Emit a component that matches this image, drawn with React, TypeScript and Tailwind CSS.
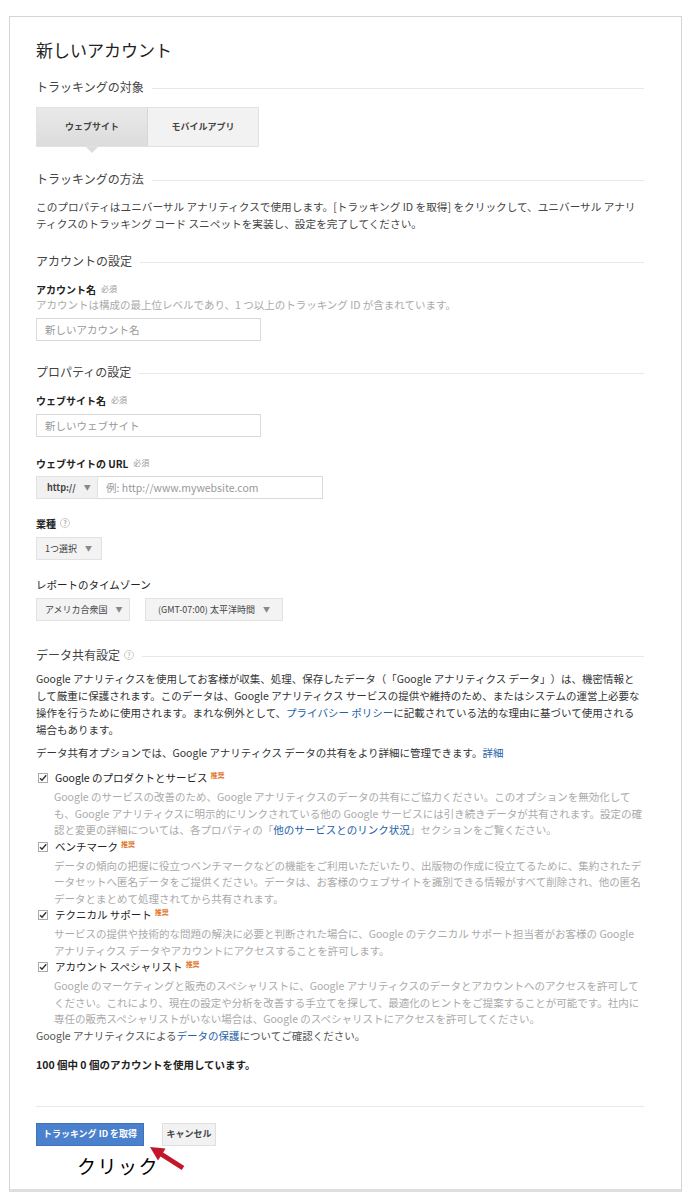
import React from 'react';

const SectionHeader = ({ title, help }: { title: string; help?: boolean }) => (
  <div className="flex items-center text-[12px] leading-[18px] text-[#444]">
    <span>{title}</span>
    {help && <HelpIcon />}
    <div className="flex-1 h-px bg-[#e8e8e8] ml-2 mt-[2px]" />
  </div>
);

const HelpIcon = () => (
  <span className="ml-1 inline-flex items-center justify-center w-[10px] h-[10px] rounded-full border border-[#ccc] text-[7px] leading-none text-[#aaa]">
    ?
  </span>
);

const Required = () => <span className="ml-[5px] text-[8px] font-normal text-[#999]">必須</span>;

const Caret = () => <span className="ml-2 text-[7px] text-[#888]">▼</span>;

const Badge = () => <span className="ml-[3px] self-start text-[7px] leading-[10px] font-bold text-[#e0762a]">推奨</span>;

const CheckBox = () => (
  <svg width="10" height="10" viewBox="0 0 10 10" className="mr-[7px] shrink-0">
    <rect x="0.5" y="0.5" width="9" height="9" fill="#fff" stroke="#aaa" />
    <path d="M2 5.2 L4 7.3 L8.2 2.2" fill="none" stroke="#333" strokeWidth="1.4" />
  </svg>
);

const options = [
  {
    title: 'Google のプロダクトとサービス',
    desc: (
      <>
        Google のサービスの改善のため、Google アナリティクスのデータの共有にご協力ください。このオプションを無効化しても、Google アナリティクスに明示的にリンクされている他の Google サービスには引き続きデータが共有されます。設定の確認と変更の詳細については、各プロパティの「
        <span className="text-[#1d61a8]">他のサービスとのリンク状況</span>」セクションをご覧ください。
      </>
    ),
  },
  {
    title: 'ベンチマーク',
    desc: 'データの傾向の把握に役立つベンチマークなどの機能をご利用いただいたり、出版物の作成に役立てるために、集約されたデータセットへ匿名データをご提供ください。データは、お客様のウェブサイトを識別できる情報がすべて削除され、他の匿名データとまとめて処理されてから共有されます。',
  },
  {
    title: 'テクニカル サポート',
    desc: 'サービスの提供や技術的な問題の解決に必要と判断された場合に、Google のテクニカル サポート担当者がお客様の Google アナリティクス データやアカウントにアクセスすることを許可します。',
  },
  {
    title: 'アカウント スペシャリスト',
    desc: 'Google のマーケティングと販売のスペシャリストに、Google アナリティクスのデータとアカウントへのアクセスを許可してください。これにより、現在の設定や分析を改善する手立てを探して、最適化のヒントをご提案することが可能です。社内に専任の販売スペシャリストがいない場合は、Google のスペシャリストにアクセスを許可してください。',
  },
];

const labelClass = 'flex items-center h-4 text-[10px] font-bold text-[#222]';

const App = () => {
  return (
    <div
      className="min-h-[1200px] bg-white pt-4 pl-[9px]"
      style={{ fontFamily: '"Noto Sans CJK JP", "Liberation Sans", sans-serif' }}
    >
      <div className="w-[673px] h-[1176px] border border-[#d4d4d4] border-b-[3px] border-b-[#dedede] pl-[26px] pr-[37px] pt-[21px] text-[#333]">
        {/* Title */}
        <h1 className="text-[17px] leading-[24px] text-[#222]">新しいアカウント</h1>

        {/* Tracking target */}
        <div className="mt-4">
          <SectionHeader title="トラッキングの対象" />
        </div>
        <div className="mt-[11px] flex w-[223px] h-10 border border-[#e2e2e2] text-[9px] font-bold text-[#444]">
          <div className="relative w-[111px] flex items-center justify-center bg-gradient-to-b from-[#e9e9e9] to-[#dcdcdc] border-r border-[#d6d6d6]">
            ウェブサイト
            <div className="absolute left-1/2 -translate-x-1/2 -bottom-[7px] w-0 h-0 border-l-[6px] border-r-[6px] border-t-[6px] border-l-transparent border-r-transparent border-t-[#dcdcdc]" />
          </div>
          <div className="flex-1 flex items-center justify-center bg-[#f2f2f2]">モバイルアプリ</div>
        </div>

        {/* Tracking method */}
        <div className="mt-[23px]">
          <SectionHeader title="トラッキングの方法" />
        </div>
        <p className="mt-[10px] text-[10.65px] leading-[17px] text-[#444]">
          このプロパティはユニバーサル アナリティクスで使用します。[トラッキング ID を取得] をクリックして、ユニバーサル アナリティクスのトラッキング コード スニペットを実装し、設定を完了してください。
        </p>

        {/* Account settings */}
        <div className="mt-5">
          <SectionHeader title="アカウントの設定" />
        </div>
        <div className={`mt-[11px] ${labelClass}`}>
          アカウント名<Required />
        </div>
        <div className="text-[10.5px] leading-4 text-[#aaa]">
          アカウントは構成の最上位レベルであり、1 つ以上のトラッキング ID が含まれています。
        </div>
        <input
          className="mt-[5px] block w-[225px] h-[23px] border border-[#d9d9d9] px-2 text-[10.5px] placeholder-[#999] outline-none"
          placeholder="新しいアカウント名"
        />

        {/* Property settings */}
        <div className="mt-[22px]">
          <SectionHeader title="プロパティの設定" />
        </div>
        <div className={`mt-[11px] ${labelClass}`}>
          ウェブサイト名<Required />
        </div>
        <input
          className="mt-[6px] block w-[225px] h-[23px] border border-[#d9d9d9] px-2 text-[10.5px] placeholder-[#999] outline-none"
          placeholder="新しいウェブサイト"
        />

        <div className={`mt-[18px] ${labelClass}`}>
          ウェブサイトの URL<Required />
        </div>
        <div className="mt-[5px] flex h-[23px] w-[287px]">
          <div className="w-[62px] flex items-center pl-[10px] bg-[#f1f1f1] border border-[#e2e2e2] text-[9px] font-bold text-[#444]">
            http://
            <Caret />
          </div>
          <input
            className="flex-1 border border-l-0 border-[#d9d9d9] px-2 text-[10.5px] placeholder-[#999] outline-none"
            placeholder="例: http://www.mywebsite.com"
          />
        </div>

        <div className={`mt-4 ${labelClass}`}>
          業種<HelpIcon />
        </div>
        <div className="mt-[6px] w-[66px] h-[23px] flex items-center pl-2 bg-[#f3f3f3] border border-[#e2e2e2] text-[9px] text-[#444]">
          1つ選択
          <Caret />
        </div>

        <div className="mt-[17px] flex items-center h-4 text-[10.5px] text-[#222]">レポートのタイムゾーン</div>
        <div className="mt-[5px] flex gap-[15px]">
          <div className="w-[94px] h-[23px] flex items-center pl-2 bg-[#f3f3f3] border border-[#e2e2e2] text-[9px] text-[#444]">
            アメリカ合衆国
            <Caret />
          </div>
          <div className="w-[138px] h-[23px] flex items-center pl-3 bg-[#f3f3f3] border border-[#e2e2e2] text-[9px] text-[#444]">
            (GMT-07:00) 太平洋時間
            <Caret />
          </div>
        </div>

        {/* Data sharing */}
        <div className="mt-[25px]">
          <SectionHeader title="データ共有設定" help />
        </div>
        <p className="mt-[6px] text-[10.5px] leading-[17px] text-[#333] [text-spacing-trim:space-all]">
          Google アナリティクスを使用してお客様が収集、処理、保存したデータ（「Google アナリティクス データ」）は、機密情報として厳重に保護されます。このデータは、Google アナリティクス サービスの提供や維持のため、またはシステムの運営上必要な操作を行うために使用されます。まれな例外として、
          <span className="text-[#1d61a8]">プライバシー ポリシー</span>
          に記載されている法的な理由に基づいて使用される場合もあります。
        </p>
        <p className="mt-[6px] text-[10.5px] leading-[17px] text-[#333]">
          データ共有オプションでは、Google アナリティクス データの共有をより詳細に管理できます。
          <span className="text-[#1d61a8]">詳細</span>
        </p>

        <div className="mt-[9px]">
          {options.map((opt) => (
            <div key={opt.title}>
              <div className="flex items-center h-4 pl-[2px] text-[10.5px] text-[#222]">
                <CheckBox />
                <span>{opt.title}</span>
                <Badge />
              </div>
              <p className="mt-[3px] pl-[18px] text-[10.5px] leading-[16.5px] text-[#aaa]">{opt.desc}</p>
            </div>
          ))}
        </div>

        <p className="text-[10.5px] leading-4 text-[#555]">
          Google アナリティクスによる<span className="text-[#1d61a8]">データの保護</span>についてご確認ください。
        </p>

        <p className="mt-[13px] text-[10.5px] leading-4 font-bold text-[#222]">100 個中 0 個のアカウントを使用しています。</p>

        <div className="mt-[33px] h-px bg-[#e8e8e8]" />

        {/* Actions */}
        <div className="mt-[16px] flex gap-[18px]">
          <button className="w-[108px] h-[23px] bg-[#4a80cc] border border-[#3f72bd] text-white text-[9px] font-bold">
            トラッキング ID を取得
          </button>
          <button className="w-[54px] h-[23px] bg-[#f2f2f2] border border-[#e0e0e0] text-[#444] text-[9px] font-bold">
            キャンセル
          </button>
        </div>
        <div className="relative pt-[7px]">
          <div className="pl-[41px] text-[19px] leading-[26px] tracking-[1.5px] text-black">クリック</div>
          <svg className="absolute left-[109px] -top-[4px]" width="45" height="34" viewBox="0 0 45 34">
            <polygon
              points="5,5 20.6,6.6 18.1,10.4 39.3,23.9 36.7,28.1 15.5,14.6 13,18.4"
              fill="#c2172b"
            />
          </svg>
        </div>
      </div>
    </div>
  );
};

export default App;
